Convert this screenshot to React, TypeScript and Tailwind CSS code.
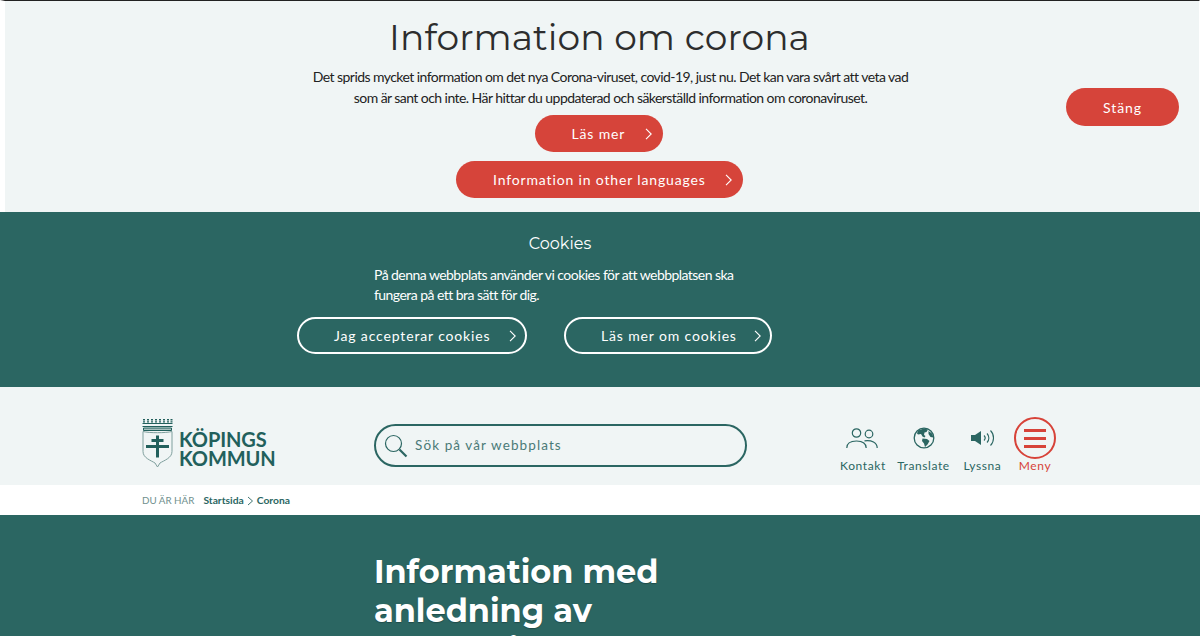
import React from "react";

const M = "font-['Montserrat','Lato',sans-serif]";

function Chevron() {
  return (
    <svg width="7" height="12" viewBox="0 0 7 12" fill="none" stroke="currentColor" strokeWidth="1.1">
      <path d="M1 .8L6.200 6 1 11.200" />
    </svg>
  );
}

function Logo() {
  return (
    <div className="flex items-start gap-[6px] text-[#22605c]">
      <svg width="31" height="50" viewBox="0 0 31 50" fill="none" stroke="currentColor">
        <path d="M2 0v4M6 0v4M10 0v4M14 0v4M18 0v4M22 0v4M26 0v4M29.500 0v4" strokeWidth="2" strokeDasharray="1.400 .8" />
        <path d="M.5 4.500h30M.5 7.500h30" strokeWidth="1" />
        <path d="M1.500 9h28v2.500H1.500z" strokeWidth="1" fill="currentColor" fillOpacity="0.35" />
        <path d="M1 12.500v20c0 6.500 8 9 12 11.500l2.500 4 2.500-4c4-2.500 12-5 12-11.500v-20c-6 1.600-23 1.600-29 0z" strokeWidth="1" stroke="#7f9f9d" fill="#f0f5f5" />
        <path d="M15.500 16.500v22" strokeWidth="3" />
        <path d="M4 27.500h23M9.500 21.500h12" strokeWidth="3" />
      </svg>
      <div className="font-['Lato',sans-serif] text-[20px] leading-[19px] font-bold tracking-[-0.1px] mt-[11px]">
        <div>KÖPINGS</div>
        <div>KOMMUN</div>
      </div>
    </div>
  );
}

function Tool({ label, w, ml, children, red }: { label: string; w: string; ml: string; children: React.ReactNode; red?: boolean }) {
  return (
    <div className={`${w} ${ml} flex flex-col items-center ${red ? "text-[#d74339]" : "text-[#2b6662]"}`}>
      <div className="h-[42px] flex items-center justify-center">{children}</div>
      <div className="text-[12px] tracking-[0.6px] leading-[14px] whitespace-nowrap">{label}</div>
    </div>
  );
}

export default function App() {
  return (
    <div className="h-[636px] w-[1200px] overflow-hidden bg-white font-['Lato',sans-serif]">
      {/* corona banner */}
      <section className="h-[212px] bg-[#f0f5f5] border-t border-[#222] border-l-[5px] border-l-white border-r-[1px] border-r-white flex items-start">
        <div className="w-[1061px] shrink-0 flex flex-col items-center pl-[128px]">
          <h1 className={`${M} text-[36px] leading-[44px] mt-[14px] tracking-[0.1px] text-[#2d2d2d] whitespace-nowrap`}>Information om corona</h1>
          <p className="w-[600px] ml-[22px] text-center text-[14px] tracking-[-0.56px] leading-[21px] text-[#222] mt-[7px]">
            Det sprids mycket information om det nya Corona-viruset, covid-19, just nu. Det kan vara svårt att veta vad som är sant och inte. Här hittar du uppdaterad och säkerställd information om coronaviruset.
          </p>
          <div className="mt-[7px] mr-[2px] w-[128px] h-[37px] rounded-full bg-[#d6443a] text-white flex items-center justify-between pl-[37px] pr-[11px] text-[14px] tracking-[0.85px] whitespace-nowrap">
            <span>Läs mer</span>
            <Chevron />
          </div>
          <div className="mt-[9px] w-[287px] h-[37px] rounded-full bg-[#d6443a] text-white flex items-center justify-between pl-[37px] pr-[11px] text-[14px] tracking-[0.85px] whitespace-nowrap">
            <span>Information in other languages</span>
            <Chevron />
          </div>
        </div>
        <div className="mt-[87px] w-[113px] h-[38px] rounded-full bg-[#d6443a] text-white flex items-center justify-center text-[14px] tracking-[0.9px]">
          Stäng
        </div>
      </section>

      {/* cookies */}
      <section className="h-[175px] bg-[#2b6662] text-white flex flex-col items-start">
        <div className={`${M} w-[1120px] text-center text-[16px] leading-[20px] mt-[22px]`}>Cookies</div>
        <p className="ml-[374px] w-[380px] text-[14px] tracking-[-0.55px] leading-[20px] mt-[11px]">
          På denna webbplats använder vi cookies för att webbplatsen ska fungera på ett bra sätt för dig.
        </p>
        <div className="ml-[297px] mt-[12px] flex gap-[37px]">
          <div className="w-[230px] h-[37px] rounded-full border-2 border-white flex items-center justify-between pl-[35px] pr-[9px] text-[14px] tracking-[0.85px] whitespace-nowrap">
            <span>Jag accepterar cookies</span>
            <Chevron />
          </div>
          <div className="w-[208px] h-[37px] rounded-full border-2 border-white flex items-center justify-between pl-[35px] pr-[9px] text-[14px] tracking-[0.85px] whitespace-nowrap">
            <span>Läs mer om cookies</span>
            <Chevron />
          </div>
        </div>
      </section>

      {/* header */}
      <header className="h-[98px] bg-[#f0f5f5] flex items-start">
        <div className="ml-[142px] mt-[32px] w-[232px] shrink-0">
          <Logo />
        </div>
        <div className="mt-[37px] w-[373px] h-[43px] rounded-full border-2 border-[#2b6662] flex items-center pl-[8px] gap-[7px] text-[#2b6662] shrink-0">
          <svg width="24" height="24" viewBox="0 0 24 24" fill="none" stroke="currentColor">
            <circle cx="9.500" cy="9.500" r="8" strokeWidth="1.200" />
            <path d="M15.500 15.500l7 7" strokeWidth="2.200" />
          </svg>
          <span className="text-[13.500px] tracking-[1.100px] text-[#4a7a77]">Sök på vår webbplats</span>
        </div>
        <div className="mt-[30px] flex items-start">
          <Tool label="Kontakt" w="w-[46px]" ml="ml-[93px]">
            <svg width="32" height="21" viewBox="0 0 32 21" fill="none" stroke="currentColor" strokeWidth="1.200" className="mr-[3px]">
              <circle cx="10.500" cy="5" r="4.200" />
              <circle cx="23" cy="6" r="3.800" />
              <path d="M.8 20c0-5 4-7 9.700-7s9.700 2 9.700 7M18.500 12.800c7-1 12.700 1.700 12.700 7.200" />
            </svg>
          </Tool>
          <Tool label="Translate" w="w-[53px]" ml="ml-[11px]">
            <svg width="22" height="22" viewBox="0 0 22 22">
              <circle cx="11" cy="11" r="9.800" fill="none" stroke="currentColor" strokeWidth="1.300" />
              <path fill="currentColor" d="M5 3.500l6-2 4 1-1.500 2.500-2 .5-.5 2.500 1.500 1-1 1.500-2-1-1.500-2.500-3 .5-1-1zM9.500 11.500l4.500.5 2.500 2-2 3.500-2.500 2.500-1-3.500-2-2.500zM15.500 4l3.500 2.500 1.500 4-3-.5-2-3z" />
            </svg>
          </Tool>
          <Tool label="Lyssna" w="w-[37px]" ml="ml-[14px]">
            <svg width="25" height="18" viewBox="0 0 25 18" fill="none" stroke="currentColor">
              <path d="M1 6h4l6-4v14l-6-4H1z" fill="currentColor" stroke="none" />
              <path d="M14 6.500c1.500 1.500 1.500 3.500 0 5M17 4.500c2.500 2.500 2.500 6.500 0 9M20.500 1.500c4 4 4 11 0 15" strokeWidth="1.100" />
            </svg>
          </Tool>
          <Tool label="Meny" w="w-[42px]" ml="ml-[13px]" red>
            <div className="w-[42px] h-[42px] rounded-full border-2 border-[#d74339] flex flex-col items-center justify-center gap-[5px]">
              <div className="w-[22px] h-[3px] bg-[#d74339]" />
              <div className="w-[22px] h-[3px] bg-[#d74339]" />
              <div className="w-[22px] h-[3px] bg-[#d74339]" />
            </div>
          </Tool>
        </div>
      </header>

      {/* breadcrumb */}
      <nav className="h-[30px] bg-white flex items-center pl-[142px] pt-[1px] text-[10.300px] text-[#2b6662]">
        <span className="text-[#6f8f8d] text-[9.800px] mr-[9px]">DU ÄR HÄR</span>
        <span className="font-bold">Startsida</span>
        <svg width="7" height="10" viewBox="0 0 7 10" fill="none" stroke="currentColor" strokeWidth="0.9" className="mx-[3px]">
          <path d="M1 1l4.500 4L1 9" />
        </svg>
        <span className="font-bold">Corona</span>
      </nav>

      {/* hero */}
      <section className="h-[121px] bg-[#2b6662] pl-[374px] pt-[37px] overflow-hidden">
        <h2 className={`${M} w-[340px] text-[32px] leading-[39px] font-bold text-white [text-shadow:0_1px_1px_rgba(0,0,0,0.25)]`}>
          Information med anledning av coronaviruset
        </h2>
      </section>
    </div>
  );
}
